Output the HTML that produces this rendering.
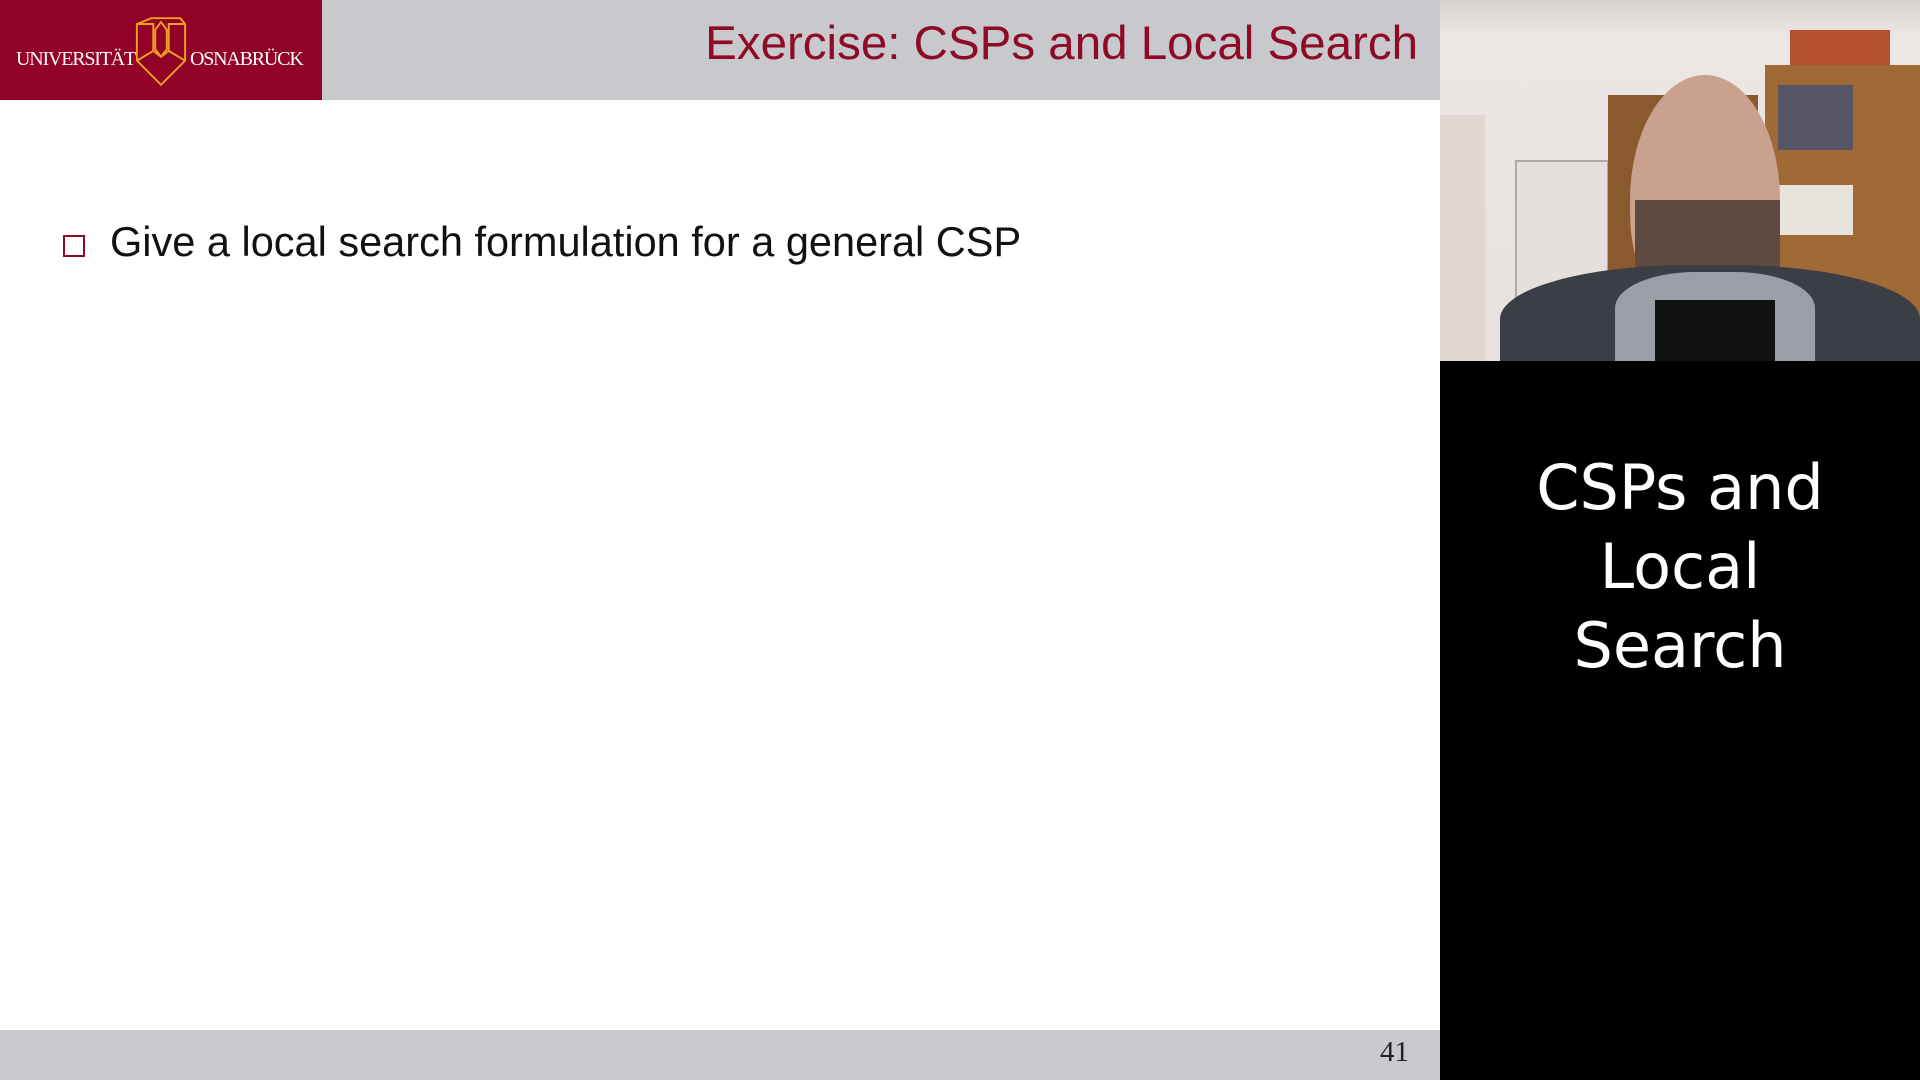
<!DOCTYPE html><html><head><style>
body{margin:0;width:1920px;height:1080px;position:relative;overflow:hidden;background:#fff;font-family:"Liberation Sans",sans-serif}
.a{position:absolute}
</style></head><body>
<div class="a" style="left:0;top:0;width:1440px;height:100px;background:#c8c9cc"></div>
<div class="a" style="left:0;top:0;width:322px;height:100px;background:#920128"></div>
<div class="a" style="left:16px;top:48px;color:#fff;font-family:'Liberation Serif',serif;font-size:20px;letter-spacing:-1.2px">UNIVERSITÄT</div>
<div class="a" style="left:190px;top:48px;color:#fff;font-family:'Liberation Serif',serif;font-size:20px;letter-spacing:-1.2px">OSNABRÜCK</div>
<svg class="a" style="left:134px;top:15px" width="54" height="72" viewBox="0 0 56 72"><g fill="none" stroke="#f0a020" stroke-width="2"><path d="M3 8 L18 2 L48 2 L53 8 L53 46 L28 71 L3 46 Z"/><path d="M3 8 L20 8 L20 36 L3 46"/><path d="M53 8 L36 8 L36 36 L53 46"/><path d="M22 34 L22 14 L28 6 L34 14 L34 34 L28 42 Z"/><path d="M20 36 L28 42 L36 36"/></g></svg>
<div class="a" style="right:502px;top:16px;color:#8f0a26;font-size:47.5px;white-space:nowrap">Exercise: CSPs and Local Search</div>
<div class="a" style="left:63px;top:235px;width:22px;height:22px;border:2px solid #8f0a26;box-sizing:border-box"></div>
<div class="a" style="left:110px;top:218px;font-size:41.5px;color:#111;white-space:nowrap">Give a local search formulation for a general CSP</div>
<div class="a" style="left:0;top:1030px;width:1440px;height:50px;background:#c8c9cc"></div>
<div class="a" style="left:1380px;top:1036px;font-family:'Liberation Serif',serif;font-size:29px;color:#222">41</div>
<div class="a" style="left:1440px;top:361px;width:480px;height:719px;background:#000"></div>
<div class="a" style="left:1440px;top:448px;width:480px;text-align:center;color:#fff;font-size:62px;line-height:79px;font-family:'DejaVu Sans',sans-serif">CSPs and<br>Local<br>Search</div>
<div class="a" style="left:1440px;top:0;width:480px;height:361px;overflow:hidden;background:linear-gradient(180deg,#d8d2d0 0,#ece6e4 10%,#e8e2df 100%)">
<div class="a" style="left:0;top:115px;width:45px;height:246px;background:#e0d8d0"></div>
<div class="a" style="left:75px;top:160px;width:90px;height:185px;background:#e4e0de;border:2px solid #aaa"></div>
<div class="a" style="left:168px;top:95px;width:150px;height:266px;background:#8a5a2e"></div>
<div class="a" style="left:325px;top:65px;width:155px;height:296px;background:#a06a36"></div>
<div class="a" style="left:338px;top:85px;width:75px;height:65px;background:#556"></div>
<div class="a" style="left:338px;top:185px;width:75px;height:50px;background:#e8e4dc"></div>
<div class="a" style="left:350px;top:30px;width:100px;height:35px;background:#b25030"></div>
<div class="a" style="left:190px;top:75px;width:150px;height:250px;border-radius:50% 50% 45% 45%;background:#caa08e"></div>
<div class="a" style="left:195px;top:200px;width:145px;height:120px;border-radius:0 0 50% 50%;background:#5e4a40"></div>
<div class="a" style="left:60px;top:265px;width:420px;height:120px;border-radius:45% 45% 0 0;background:#3c3e46"></div>
<div class="a" style="left:175px;top:272px;width:200px;height:90px;background:#9a9ea6;border-radius:40% 40% 0 0"></div>
<div class="a" style="left:215px;top:300px;width:120px;height:61px;background:#111"></div>
</div>
</body></html>
